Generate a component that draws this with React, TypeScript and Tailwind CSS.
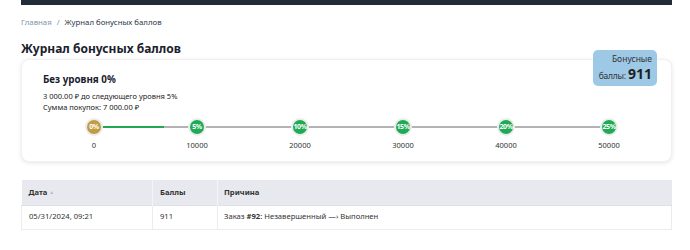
import React from "react";

const levels = [
  { pct: "0%", sum: "0", current: true },
  { pct: "5%", sum: "10000" },
  { pct: "10%", sum: "20000" },
  { pct: "15%", sum: "30000" },
  { pct: "20%", sum: "40000" },
  { pct: "25%", sum: "50000" },
];

const App = () => {
  return (
    <div
      className="w-[690px] h-[250px] bg-white overflow-hidden"
      style={{ fontFamily: '"Noto Sans", "Open Sans", sans-serif' }}
    >
      <div className="pl-[21px] w-[672px]">
        <div className="h-[5px] bg-[#222b38]" />

        <div className="mt-[11px] text-[7.8px] leading-[12px] text-[#2d3748]">
          <span className="text-[#7f93ab]">Главная</span>
          <span className="mx-[5px] text-[#7f93ab]">/</span>
          <span>Журнал бонусных баллов</span>
        </div>

        <div className="relative mt-[12px]">
          <h1 className="text-[12px] leading-[18px] font-bold text-[#1a202c]">
            Журнал бонусных баллов
          </h1>

          <div className="absolute right-[15px] top-[10px] z-10 bg-[#9ec9e6] rounded-[5px] pl-[6px] pr-[5px] pt-[3px] pb-[2px] text-right text-[#333] whitespace-nowrap">
            <div className="text-[8.5px] leading-[12px]">Бонусные</div>
            <div className="text-[8.5px] leading-[17px] tracking-[-0.2px]">
              баллы: <span className="text-[14px] font-bold text-[#1e1e1e] tracking-normal">911</span>
            </div>
          </div>

          <div className="mt-[1px] rounded-[8px] bg-white shadow-[0_1px_4px_rgba(0,0,0,0.1)] border border-[#f1f1f3] h-[103px] pt-[12px] px-[21px]">
            <div className="text-[9.8px] leading-[15px] font-bold text-[#1a202c]">Без уровня 0%</div>
            <div className="mt-[4px] text-[7.5px] leading-[11px] text-[#222]">
              <div>3 000.00 ₽ до следующего уровня 5%</div>
              <div>Сумма покупок: 7 000.00 ₽</div>
            </div>

            <div className="relative mt-[5px] ml-[51px] w-[515px] h-[38px]">
              <div className="absolute left-0 right-0 top-[8px] h-[2px] bg-[#b3b3b3]" />
              <div className="absolute left-0 w-[70px] top-[8px] h-[2px] bg-[#22a852]" />
              {levels.map((l, i) => (
                <div
                  key={l.pct}
                  className="absolute top-0 flex flex-col items-center w-[40px] ml-[-20px]"
                  style={{ left: i * 103 }}
                >
                  <div className="w-[18px] h-[18px] rounded-full bg-[#ececec] flex items-center justify-center">
                    <div
                      className={
                        "w-[14px] h-[14px] rounded-full flex items-center justify-center text-white text-[7px] font-bold tracking-[-0.4px] " +
                        (l.current ? "bg-[#c09c45]" : "bg-[#1faa55]")
                      }
                    >
                      {l.pct}
                    </div>
                  </div>
                  <div className="mt-[4px] text-[7.5px] leading-[10px] text-[#333]">{l.sum}</div>
                </div>
              ))}
            </div>
          </div>
        </div>

        <table className="mt-[18px] w-full border-collapse text-[7.65px] text-[#333]">
          <thead>
            <tr className="bg-[#e8e9ef] h-[25px] border-b border-[#dedfe8]">
              <th className="text-left font-bold pl-[7px] w-[131px] border-r border-[#f4f4f7]">
                Дата <span className="text-[#b8bcc8] text-[5px] align-middle">▲</span>
              </th>
              <th className="text-left font-bold pl-[7px] w-[65px] border-r border-[#f4f4f7]">Баллы</th>
              <th className="text-left font-bold pl-[6px]">Причина</th>
            </tr>
          </thead>
          <tbody>
            <tr className="h-[24px] border-b border-x border-[#ececef]">
              <td className="pl-[7px] border-r border-[#ececef]">05/31/2024, 09:21</td>
              <td className="pl-[7px] border-r border-[#ececef]">911</td>
              <td className="pl-[6px]">
                Заказ <span className="font-bold">#92</span>: Незавершенный —› Выполнен
              </td>
            </tr>
          </tbody>
        </table>
      </div>
    </div>
  );
};

export default App;
